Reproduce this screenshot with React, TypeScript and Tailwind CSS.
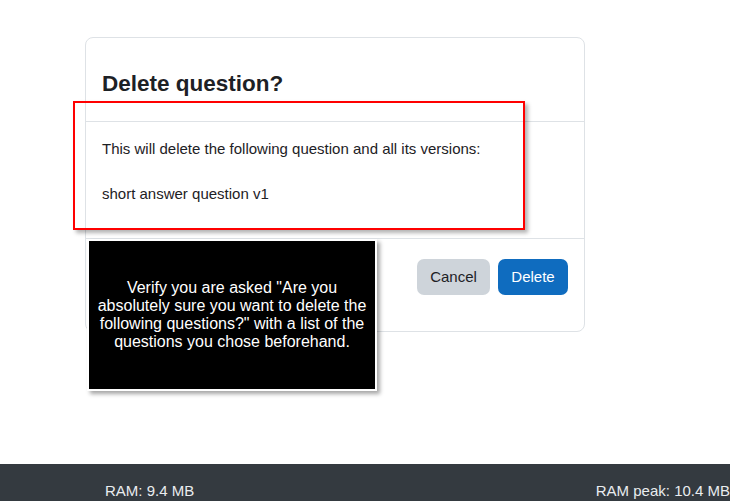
export default function App() {
  return (
    <div
      className="relative flex min-h-screen flex-col bg-white text-[#1d2125]"
      style={{ fontFamily: '"Liberation Sans", Arial, sans-serif' }}
    >
      <div className="flex-1 pl-[85px] pt-[37px]">
        {/* Modal */}
        <div className="w-[500px] rounded-lg border border-[#dee2e6] bg-white">
          <div className="border-b border-[#dee2e6] px-4 pb-[24px] pt-[32px]">
            <h5 className="text-[22.5px] font-bold leading-[27px]">Delete question?</h5>
          </div>
          <div className="px-4 pb-[33px] pt-4 text-[15px] leading-[22.5px]">
            <p className="mb-[22px]">This will delete the following question and all its versions:</p>
            <p>short answer question v1</p>
          </div>
          <div className="flex justify-end gap-2 border-t border-[#dee2e6] px-4 pb-[36px] pt-[20px]">
            <button className="h-[36px] w-[73px] rounded-[7px] bg-[#ced4da] text-[15px] text-[#1d2125]">
              Cancel
            </button>
            <button className="h-[36px] w-[70px] rounded-[7px] bg-[#0f6cbf] text-[15px] text-white">
              Delete
            </button>
          </div>
        </div>
      </div>

      {/* Highlight overlay */}
      <div className="absolute left-[73px] top-[101px] h-[129px] w-[452px] border-2 border-[#ff0000] shadow-[3px_3px_4px_rgba(0,0,0,0.3)]" />

      {/* Instruction tooltip */}
      <div className="absolute left-[87px] top-[239px] flex h-[152px] w-[290px] items-center justify-center border-2 border-white bg-black px-2 text-center text-[16px] leading-[18px] text-white shadow-[3px_3px_4px_rgba(0,0,0,0.35)]">
        Verify you are asked "Are you absolutely sure you want to delete the following questions?" with a list of the
        questions you chose beforehand.
      </div>

      {/* Footer */}
      <footer className="flex h-[37px] justify-between bg-[#343a40] pl-[105px] pt-[16px] text-[15px] leading-[22px] text-[#e9ecef]">
        <span>RAM: 9.4 MB</span>
        <span>RAM peak: 10.4 MB</span>
      </footer>
    </div>
  );
}
